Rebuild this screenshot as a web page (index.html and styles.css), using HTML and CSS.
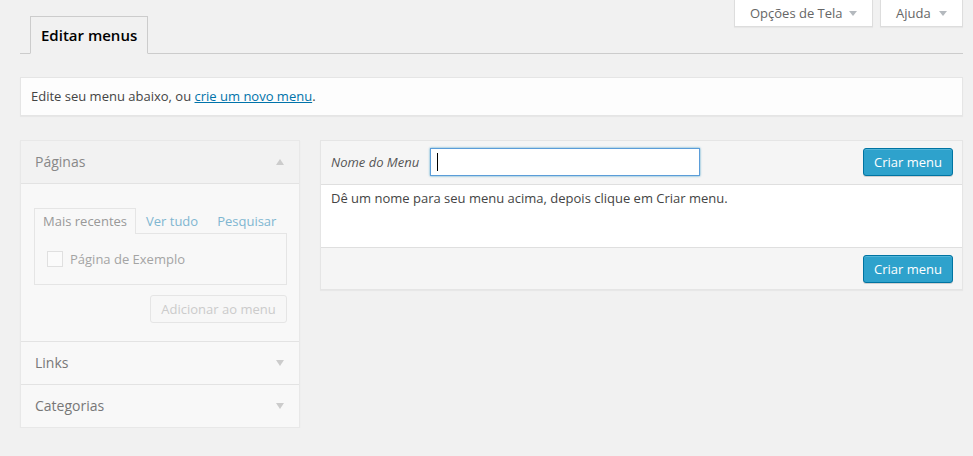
FILE: index.html
```html
<!DOCTYPE html>
<html lang="pt-BR">
<head>
<meta charset="utf-8">
<title>Editar menus</title>
<link rel="stylesheet" href="styles.css">
</head>
<body>
<div class="screen-meta">
  <button class="meta-btn meta-opts"><span>Opções de Tela</span><svg class="tri" width="8" height="5" viewBox="0 0 8 5"><polygon points="0,0 8,0 4,5" fill="#b4b9be"/></svg></button>
  <button class="meta-btn meta-help"><span>Ajuda</span><svg class="tri" width="8" height="5" viewBox="0 0 8 5"><polygon points="0,0 8,0 4,5" fill="#b4b9be"/></svg></button>
</div>
<div class="wrap">
  <div class="nav-tabs"><span class="nav-tab">Editar menus</span></div>
  <div class="notice">Edite seu menu abaixo, ou <a href="#">crie um novo menu</a>.</div>
  <div class="columns">
    <div class="side">
      <div class="acc-title open">
        <span>Páginas</span>
        <svg width="8" height="6" viewBox="0 0 8 6"><polygon points="0,6 8,6 4,0" fill="#cccccc"/></svg>
      </div>
      <div class="acc-body">
        <ul class="tabs">
          <li class="tab active">Mais recentes</li>
          <li class="tab">Ver tudo</li>
          <li class="tab">Pesquisar</li>
        </ul>
        <div class="tab-panel">
          <label class="item"><span class="cb"></span>Página de Exemplo</label>
        </div>
        <div class="add-row"><button class="btn-disabled">Adicionar ao menu</button></div>
      </div>
      <div class="acc-title">
        <span>Links</span>
        <svg width="8" height="6" viewBox="0 0 8 6"><polygon points="0,0 8,0 4,6" fill="#cccccc"/></svg>
      </div>
      <div class="acc-title last">
        <span>Categorias</span>
        <svg width="8" height="6" viewBox="0 0 8 6"><polygon points="0,0 8,0 4,6" fill="#cccccc"/></svg>
      </div>
    </div>
    <div class="main">
      <div class="main-head">
        <span class="label">Nome do Menu</span>
        <span class="input-wrap"><input class="name-input" type="text"><span class="caret"></span></span>
        <button class="btn-primary">Criar menu</button>
      </div>
      <div class="main-body">Dê um nome para seu menu acima, depois clique em Criar menu.</div>
      <div class="main-foot">
        <button class="btn-primary">Criar menu</button>
      </div>
    </div>
  </div>
</div>
</body>
</html>
```

FILE: styles.css
```css
* { box-sizing: border-box; }
html, body { margin: 0; padding: 0; }
body {
  background: #f1f1f1;
  font-family: "Open Sans", "Noto Sans", sans-serif;
  font-size: 13px;
  line-height: 19px;
  color: #444;
}
button { font-family: inherit; font-size: 13px; }

.screen-meta {
  float: right;
  display: flex;
  gap: 7px;
  margin-right: 10px;
}
.meta-btn {
  height: 27px;
  background: #fff;
  border: 1px solid #ddd;
  border-top: none;
  box-shadow: 0 1px 1px rgba(0,0,0,.04);
  color: #666;
  padding: 0 15px 0 15px;
  line-height: 26px;
  display: flex;
  align-items: center;
  justify-content: space-between;
  white-space: nowrap;
  margin: 0;
}
.meta-opts { width: 139px; }
.meta-help { width: 83px; }
.tri { margin-top: 1px; flex: none; }

.wrap { margin: 0 10px 0 20px; }

.nav-tabs {
  padding: 16px 0 0 10px;
  border-bottom: 1px solid #ccc;
  line-height: 0;
}
.nav-tab {
  display: inline-block;
  vertical-align: bottom;
  border: 1px solid #ccc;
  border-bottom: 1px solid #f1f1f1;
  margin-bottom: -1px;
  padding: 6px 10px;
  font-size: 15px;
  line-height: 24px;
  font-weight: 600;
  color: #000;
  background: #f1f1f1;
}

.notice {
  margin-top: 23px;
  background: #fdfdfd;
  border: 1px solid #e5e5e5;
  box-shadow: 0 1px 1px rgba(0,0,0,.04);
  padding: 9px 10px;
  color: #444;
}
.notice a { color: #0073aa; text-decoration: underline; }

.columns {
  margin-top: 24px;
  display: flex;
  gap: 20px;
  align-items: flex-start;
}

.side {
  width: 280px;
  flex: none;
  border: 1px solid #e8e8e8;
  box-shadow: 0 1px 1px rgba(0,0,0,.05);
  background: #f8f8f8;
}
.acc-title {
  height: 43px;
  padding: 0 15px 0 14px;
  border-bottom: 1px solid #e3e3e3;
  display: flex;
  justify-content: space-between;
  align-items: center;
  font-size: 14px;
  color: #777;
  background: #f8f8f8;
}
.acc-title span { margin-top: -2px; }
.acc-title.open { background: #f2f2f2; color: #888; }
.acc-title.last { border-bottom: none; height: 42px; }

.acc-body {
  padding: 24px 12px 18px 13px;
  border-bottom: 1px solid #e3e3e3;
}
.tabs {
  list-style: none;
  margin: 0;
  padding: 0;
  display: flex;
  align-items: flex-end;
  position: relative;
  z-index: 1;
}
.tab {
  padding: 3px 8px 2px;
  border: 1px solid transparent;
  border-bottom: none;
  margin-right: 1px;
  color: #7fb6d1;
  line-height: 19px;
}
.tab.active {
  border-color: #e5e5e5;
  background: #f8f8f8;
  color: #999;
  margin-bottom: -1px;
  padding-bottom: 3px;
}
.tab-panel {
  border: 1px solid #e5e5e5;
  padding: 17px 12px 17px;
  height: 52px;
}
.item {
  display: flex;
  align-items: center;
  height: 16px;
  color: #a4a4a4;
}
.cb {
  width: 16px;
  height: 16px;
  border: 1px solid #e0e0e0;
  background: #fbfbfb;
  margin-right: 7px;
  flex: none;
}
.add-row {
  display: flex;
  justify-content: flex-end;
  margin-top: 10px;
}
.btn-disabled {
  height: 28px;
  width: 137px;
  padding: 0 8px;
  background: #f7f7f7;
  border: 1px solid #e5e5e5;
  border-radius: 3px;
  color: #cbcbcb;
  line-height: 26px;
  white-space: nowrap;
}

.main {
  flex: 1;
  border: 1px solid #e5e5e5;
  box-shadow: 0 1px 1px rgba(0,0,0,.04);
  background: #f5f5f5;
}
.main-head {
  display: flex;
  align-items: center;
  padding: 7px 9px 8px 10px;
  border-bottom: 1px solid #dfdfdf;
}
.label {
  font-style: italic;
  color: #555;
  width: 99px;
  flex: none;
}
.input-wrap {
  position: relative;
  display: block;
  width: 270px;
  height: 28px;
}
.name-input {
  display: block;
  width: 270px;
  height: 28px;
  border: 1px solid #5b9dd9;
  box-shadow: 0 0 2px rgba(30,140,190,.8);
  background: #fff;
  outline: none;
  margin: 0;
  padding: 0 6px;
  font: 13px "Open Sans", sans-serif;
}
.caret {
  position: absolute;
  left: 7px;
  top: 5px;
  width: 1px;
  height: 18px;
  background: #000;
}
.btn-primary {
  margin-left: auto;
  height: 28px;
  width: 90px;
  padding: 0 8px;
  background: #2ea2cc;
  border: 1px solid #0074a2;
  border-radius: 3px;
  color: #fff;
  line-height: 26px;
  white-space: nowrap;
  box-shadow: inset 0 1px 0 rgba(120,200,230,.5), 0 1px 0 rgba(0,0,0,.15);
}
.main-body {
  background: #fff;
  height: 62px;
  padding: 4px 10px;
  color: #444;
}
.main-foot {
  display: flex;
  border-top: 1px solid #dfdfdf;
  padding: 7px 9px 6px 10px;
}
```
